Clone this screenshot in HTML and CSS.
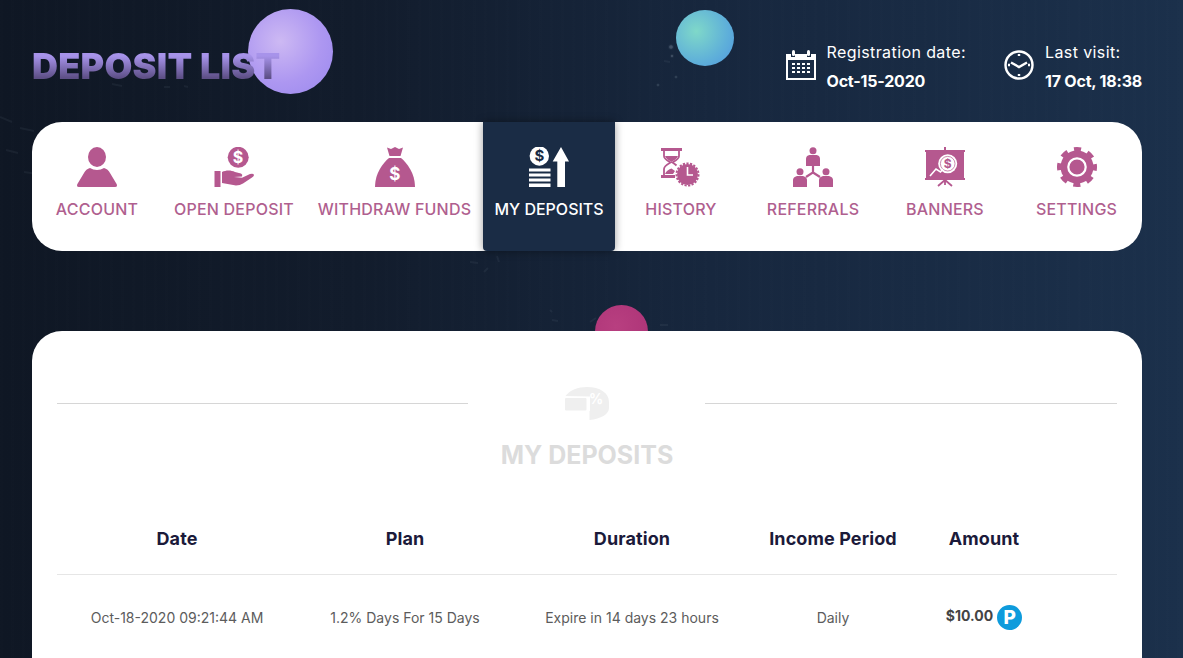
FILE: index.html
```html
<!DOCTYPE html>
<html lang="en">
<head>
    <meta charset="UTF-8">
    <meta name="viewport" content="width=device-width, initial-scale=1.0">
    <title>Deposit List</title>
    <link rel="stylesheet" href="styles.css">
</head>
<body>

    <!-- Fondo decorativo -->
    <div class="sphere sphere-purple"></div>
    <div class="sphere sphere-teal"></div>
    <div class="sphere sphere-pink"></div>
    <svg class="specks" viewBox="0 0 1183 658">
        <path d="M0 117L12 122M20 128L34 131M6 150L18 153M24 172L44 175M36 140L40 148M112 84L122 86M164 87L170 87M184 86L188 87"/>
        <path d="M664 61L670 62M470 262L478 263M497 256L499 262M484 272L488 268M552 320L558 321M590 322L596 318M660 325L668 325M550 310L552 312"/>
        <circle cx="671" cy="47" r="1.800"/><circle cx="672" cy="56" r="1"/><circle cx="676" cy="77" r="0.800"/><circle cx="658" cy="85" r="0.800"/>
    </svg>

    <header class="top">
        <h1 class="page-title">Deposit List</h1>
        <div class="user-info">
            <div class="info-item">
                <svg class="info-icon" viewBox="0 0 30 30">
                    <path d="M0 4H5V7H9V4H21V7H25V4H30V30H0Z"/>
                    <rect x="6" y="0" width="3" height="6" rx="1.500"/>
                    <rect x="21" y="0" width="3" height="6" rx="1.500"/>
                    <rect class="cut" x="2" y="10" width="26" height="18"/>
                    <path d="M6 13h3v2H6zM11 13h3v2h-3zM16 13h3v2h-3zM21 13h3v2h-3zM6 17h3v2H6zM11 17h3v2h-3zM16 17h3v2h-3zM21 17h3v2h-3zM6 21h3v2H6zM11 21h3v2h-3zM16 21h3v2h-3zM21 21h3v2h-3z"/>
                </svg>
                <div>
                    <div class="info-label">Registration date:</div>
                    <div class="info-value">Oct-15-2020</div>
                </div>
            </div>
            <div class="info-item">
                <svg class="info-icon clock" viewBox="0 0 30 30">
                    <circle cx="15" cy="15" r="13.500"/>
                    <path d="M7 12.500L15 17L23 12.500M15 4V6M15 24V26M4 15H6M24 15H26"/>
                </svg>
                <div>
                    <div class="info-label">Last visit:</div>
                    <div class="info-value">17 Oct, 18:38</div>
                </div>
            </div>
        </div>
    </header>

    <nav class="menu">
        <a class="menu-item" href="#">
            <svg class="menu-icon" viewBox="0 0 40 40">
                <ellipse cx="20" cy="10" rx="9" ry="10"/>
                <path d="M0 38.500Q0 37 1 36L7 26Q9 22 13 21Q16 23 20 23Q24 23 27 21Q31 22 33 26L39 36Q40 37 40 38.500Q40 40 38 40H2Q0 40 0 38.500Z"/>
            </svg>
            <span>Account</span>
        </a>
        <a class="menu-item" href="#">
            <svg class="menu-icon" viewBox="0 0 40 40">
                <circle cx="24.200" cy="10.300" r="10.500"/>
                <text class="cut-text" x="24.200" y="15.800" font-size="16">$</text>
                <rect x="0.500" y="24" width="6" height="16"/>
                <path d="M8 25C12 23 17 23 21 25L27 26.500Q29 27.500 28 29.500L20 30L28 30.700L36 27Q39.500 26 40 28Q40 29 38 30.500L29 36.500Q26 38.500 22 38.500L8 36Z"/>
            </svg>
            <span>Open Deposit</span>
        </a>
        <a class="menu-item" href="#">
            <svg class="menu-icon" viewBox="0 0 40 40">
                <path d="M12 0.500L16 2L20 0L24 2L28 0.500L25.500 9H14.500Z"/>
                <path d="M14 11H26C32 16 40 26 40 40H0C0 26 8 16 14 11Z"/>
                <text class="cut-text" x="20" y="33" font-size="17">$</text>
            </svg>
            <span>Withdraw Funds</span>
        </a>
        <a class="menu-item active" href="#">
            <svg class="menu-icon" viewBox="0 0 40 40">
                <circle cx="10.300" cy="9" r="9.700"/>
                <text class="cut-text" x="10.300" y="14.200" font-size="15">$</text>
                <path d="M0 21.500H21.500V24.500H0ZM0 26.500H21.500V29.500H0ZM0 31.500H21.500V34.500H0ZM0 36.500H21.500V40H0Z"/>
                <path d="M32 0L40 14.500H36V40H28.300V14.500H23.700Z"/>
            </svg>
            <span>My Deposits</span>
        </a>
        <a class="menu-item" href="#">
            <svg class="menu-icon" viewBox="0 0 40 40">
                <rect x="0" y="1" width="21" height="3"/>
                <rect x="0" y="28" width="14" height="3"/>
                <path class="pink-line thin" d="M3 4V9C3 12 7 14 9.500 15.500C7 17 3 19 3 22V28M18 4V9C18 12 14 14 11.500 15.500C13 16.500 14.500 17.500 15.500 18.500"/>
                <path d="M4 9H17C16 12 13 13.500 10.500 15C8 13.500 5 12 4 9ZM4 27C5 24 8 22.500 10.500 21.500L14 24L12 27Z"/>
                <circle cx="26.500" cy="27.500" r="10.500"/>
                <circle class="gear-teeth" cx="26.500" cy="27.500" r="11"/>
                <path class="cut-line" d="M26.500 20V28H32"/>
            </svg>
            <span>History</span>
        </a>
        <a class="menu-item" href="#">
            <svg class="menu-icon" viewBox="0 0 40 40">
                <circle cx="20" cy="3.700" r="3.500"/>
                <path d="M13 19V12Q13 8.500 16.500 8H23.500Q27 8.500 27 12V19Z"/>
                <circle cx="7" cy="24.700" r="3.500"/>
                <circle cx="33" cy="24.700" r="3.500"/>
                <path d="M0 40V33Q0 30 4 29H10Q14 30 14 33V40Z"/>
                <path d="M26 40V33Q26 30 30 29H36Q40 30 40 33V40Z"/>
                <path class="pink-line" d="M20 19V25.500L13 30M20 25.500L27 30"/>
            </svg>
            <span>Referrals</span>
        </a>
        <a class="menu-item" href="#">
            <svg class="menu-icon" viewBox="0 0 40 40">
                <rect x="19" y="0" width="2" height="4"/>
                <rect x="0" y="3" width="40" height="2"/>
                <rect x="1" y="4" width="38" height="28"/>
                <rect x="0" y="31" width="40" height="2"/>
                <path class="pink-line thin" d="M20 32V38M20 33L13 39M20 33L27 39"/>
                <circle class="cut-disc" cx="22.700" cy="16.700" r="9.500"/>
                <circle class="pink-line thin-ring" cx="22.700" cy="16.700" r="7.300"/>
                <text class="pink-text" x="22.700" y="21" font-size="12">$</text>
                <path class="cut-line" d="M5 29L11 22L15.500 25L18 22"/>
            </svg>
            <span>Banners</span>
        </a>
        <a class="menu-item" href="#">
            <svg class="menu-icon" viewBox="0 0 40 40">
                <circle cx="20" cy="20" r="16.500"/>
                <circle class="gear-big" cx="20" cy="20" r="17.500"/>
                <circle class="cut-ring" cx="20" cy="20" r="8.700"/>
            </svg>
            <span>Settings</span>
        </a>
    </nav>

    <main class="card">
        <div class="card-head">
            <svg class="card-icon" viewBox="0 0 44 33">
                <path d="M0.500 9C5 3 13 0 22 0C35 0 44 6 44 15V21C44 27 36 32 24.500 33V24H25V9.500Z"/>
                <rect x="0" y="11" width="21.500" height="12.500" rx="1"/>
                <text x="31" y="16.500" font-size="14">%</text>
            </svg>
            <h2 class="card-title">My Deposits</h2>
        </div>

        <table class="deposits">
            <colgroup>
                <col class="col-date">
                <col class="col-plan">
                <col class="col-duration">
                <col class="col-period">
                <col class="col-amount">
                <col>
            </colgroup>
            <thead>
                <tr>
                    <th>Date</th>
                    <th>Plan</th>
                    <th>Duration</th>
                    <th>Income Period</th>
                    <th>Amount</th>
                    <th></th>
                </tr>
            </thead>
            <tbody>
                <tr>
                    <td>Oct-18-2020 09:21:44 AM</td>
                    <td>1.2% Days For 15 Days</td>
                    <td>Expire in 14 days 23 hours</td>
                    <td>Daily</td>
                    <td>
                        <div class="amount">
                            <b>$10.00</b>
                            <span class="pay-badge">P</span>
                        </div>
                    </td>
                    <td></td>
                </tr>
            </tbody>
        </table>
    </main>

</body>
</html>
```

FILE: styles.css
```css
html, body {
    height: 100%;
}

body {
    margin: 0;
    overflow: hidden;
    position: relative;
    font-family: Inter, "Noto Sans", sans-serif;
    color: #fff;
    background-color: #111a29;
    background-image:
        repeating-linear-gradient(90deg, rgba(255, 255, 255, 0.004) 0 3px, transparent 3px 11px),
        linear-gradient(90deg, #0f1724 0%, #121c2c 30%, #17273e 60%, #1b304b 100%);
}

/* Esferas del fondo */
.sphere {
    position: absolute;
    border-radius: 50%;
}

.sphere-purple {
    left: 248px;
    top: 9px;
    width: 85px;
    height: 85px;
    background: radial-gradient(circle at 38% 38%, #cdb9f3 0%, #ad97f1 55%, #9a88ee 100%);
}

.sphere-teal {
    left: 676px;
    top: 10px;
    width: 58px;
    height: 56px;
    background: radial-gradient(circle at 35% 38%, #7fd8c9 0%, #5fb0d9 60%, #4f97e0 100%);
}

.sphere-pink {
    left: 595px;
    top: 305px;
    width: 53px;
    height: 53px;
    background: radial-gradient(circle at 40% 40%, #b83f80 0%, #ab3276 100%);
}

.specks {
    position: absolute;
    left: 0;
    top: 0;
    width: 1183px;
    height: 658px;
    fill: rgba(190, 205, 220, 0.24);
    stroke: rgba(170, 190, 205, 0.07);
    stroke-width: 2;
}

/* Cabecera */
.top {
    position: relative;
    display: flex;
    justify-content: space-between;
    align-items: center;
    width: 1110px;
    height: 122px;
    margin-left: 32px;
}

.page-title {
    margin: 10px 0 0;
    font-size: 36px;
    font-weight: 900;
    line-height: 40px;
    text-transform: uppercase;
    letter-spacing: 0.25px;
    background: linear-gradient(180deg, #a793ea 25%, #5d4f86 80%);
    -webkit-background-clip: text;
    background-clip: text;
    color: transparent;
}

.user-info {
    display: flex;
    gap: 38px;
    margin-top: 12px;
}

.info-item {
    display: flex;
    align-items: center;
    gap: 11px;
}

.info-icon {
    width: 30px;
    height: 30px;
    margin-top: -4px;
    fill: #fff;
}

.info-icon .cut {
    fill: #1a2c45;
}

.info-icon.clock {
    fill: none;
    stroke: #fff;
    stroke-width: 2.400;
}

.info-label {
    font-size: 16px;
    line-height: 29px;
    letter-spacing: 0.4px;
}

.info-value {
    font-size: 16px;
    font-weight: 700;
    line-height: 29px;
    letter-spacing: -0.2px;
}

/* Menu principal */
.menu {
    position: relative;
    display: grid;
    grid-template-columns: 130px 144px 177px 132px 132px 132px 132px 131px;
    width: 1110px;
    height: 129px;
    margin-left: 32px;
    background: #fff;
    border-radius: 30px;
}

.menu-item {
    display: flex;
    flex-direction: column;
    align-items: center;
    gap: 12px;
    padding-top: 25px;
    color: #b05f8f;
    font-size: 16px;
    font-weight: 500;
    line-height: 20px;
    letter-spacing: 0.2px;
    text-transform: uppercase;
    text-decoration: none;
    white-space: nowrap;
}

.menu-item.active {
    color: #fff;
    letter-spacing: 0;
    background: #1a2c45;
    border-radius: 0 0 4px 4px;
    box-shadow: 0 0 8px rgba(0, 0, 0, 0.4);
}

.menu-icon {
    width: 40px;
    height: 40px;
    fill: #b5588f;
}

.active .menu-icon {
    fill: #fff;
}

.cut-text, .pink-text {
    font-family: Inter, sans-serif;
    font-weight: 700;
    text-anchor: middle;
    fill: #fff;
}

.active .cut-text {
    fill: #1a2c45;
}

.pink-text {
    fill: #b5588f;
}

.cut-line {
    fill: none;
    stroke: #fff;
    stroke-width: 1.600;
}

.cut-disc {
    fill: #fff;
}

.cut-ring {
    fill: #b5588f;
    stroke: #fff;
    stroke-width: 2.200;
}

.pink-line {
    fill: none;
    stroke: #b5588f;
    stroke-width: 2.200;
}

.pink-line.thin {
    stroke-width: 1.800;
}

.pink-line.thin-ring {
    stroke-width: 0.700;
}

.gear-teeth {
    fill: none;
    stroke: #b5588f;
    stroke-width: 2;
    stroke-dasharray: 2.200 1.400;
}

.gear-big {
    fill: none;
    stroke: #b5588f;
    stroke-width: 5;
    stroke-dasharray: 7 6.740;
    stroke-dashoffset: 3.500;
}

/* Tarjeta de depositos */
.card {
    position: relative;
    box-sizing: border-box;
    width: 1110px;
    height: 400px;
    margin: 80px 0 0 32px;
    padding: 56px 25px 0;
    color: #4a4a4a;
    background: #fff;
    border-radius: 30px;
}

.card-head {
    display: flex;
    flex-direction: column;
    align-items: center;
    gap: 20px;
    background-image: linear-gradient(#d6d6d6, #d6d6d6), linear-gradient(#d6d6d6, #d6d6d6);
    background-size: 411px 1px, 412px 1px;
    background-position: left 16px, right 16px;
    background-repeat: no-repeat;
}

.card-icon {
    width: 44px;
    height: 33px;
    fill: #efefef;
}

.card-icon text {
    font-family: Inter, sans-serif;
    font-weight: 700;
    text-anchor: middle;
    fill: #fff;
}

.card-title {
    margin: 0;
    font-size: 25px;
    font-weight: 700;
    line-height: 30px;
    text-transform: uppercase;
    color: #dcdcdc;
}

.deposits {
    width: 1060px;
    margin-top: 33px;
    table-layout: fixed;
    border-collapse: collapse;
}

.col-date { width: 240px; }
.col-plan { width: 216px; }
.col-duration { width: 238px; }
.col-period { width: 164px; }
.col-amount { width: 138px; }

.deposits th {
    height: 71px;
    padding: 0;
    font-size: 18px;
    font-weight: 700;
    letter-spacing: 0.1px;
    color: #1b1a3a;
    border-bottom: 1px solid #e6e6e6;
}

.deposits td {
    height: 85px;
    padding: 0;
    font-size: 14px;
    text-align: center;
    color: #5c5c5c;
}

.amount {
    display: flex;
    justify-content: center;
    align-items: center;
    gap: 4px;
}

.amount b {
    margin-top: -4px;
    color: #444;
}

.pay-badge {
    width: 25px;
    height: 25px;
    border-radius: 50%;
    font-size: 19px;
    font-weight: 800;
    line-height: 25px;
    color: #fff;
    background: #0e9bdc;
}
```
